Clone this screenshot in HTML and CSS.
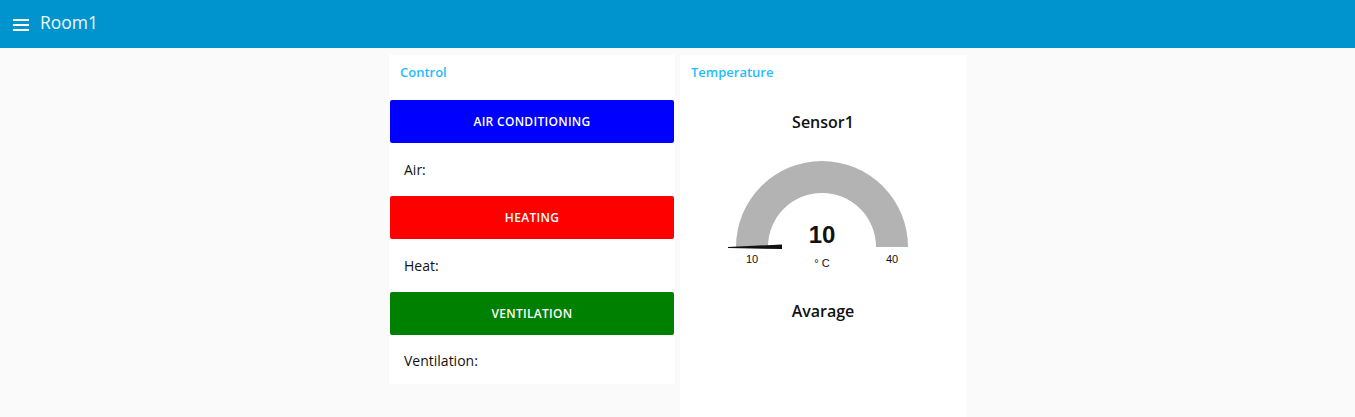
FILE: index.html
```html
<!DOCTYPE html>
<html>
<head>
<meta charset="utf-8">
<link rel="stylesheet" href="styles.css">
</head>
<body>
<header class="toolbar">
  <svg class="menu-icon" width="16" height="14" viewBox="0 0 16 14">
    <rect x="0" y="1" width="16" height="2" fill="#fff"/>
    <rect x="0" y="6" width="16" height="2" fill="#fff"/>
    <rect x="0" y="11" width="16" height="2" fill="#fff"/>
  </svg>
  <span class="title">Room1</span>
</header>
<main class="content">
  <section class="card control">
    <div class="card-title">Control</div>
    <button class="btn btn-blue">AIR CONDITIONING</button>
    <div class="label-row">Air:</div>
    <button class="btn btn-red">HEATING</button>
    <div class="label-row">Heat:</div>
    <button class="btn btn-green">VENTILATION</button>
    <div class="label-row last">Ventilation:</div>
  </section>
  <section class="card temp">
    <div class="card-title">Temperature</div>
    <div class="gauge-title">Sensor1</div>
    <svg class="gauge" width="286" height="145" viewBox="0 0 286 145">
      <path d="M 56 103 A 86 86 0 0 1 228 103 L 196 103 A 54 54 0 0 0 88 103 Z" fill="#b3b3b3"/>
      <polygon points="48,103 102,100.5 102,105 48,104" fill="#111"/>
      <text x="142" y="99" class="g-value" text-anchor="middle">10</text>
      <text x="142" y="123" class="g-unit" text-anchor="middle">° C</text>
      <text x="72" y="119" class="g-minmax" text-anchor="middle">10</text>
      <text x="212" y="119" class="g-minmax" text-anchor="middle">40</text>
    </svg>
    <div class="gauge-title">Avarage</div>
  </section>
</main>
</body>
</html>
```

FILE: styles.css
```css
html, body {
  margin: 0;
  padding: 0;
  background: #fafafa;
  font-family: "Open Sans", "Noto Sans", sans-serif;
  overflow: hidden;
}

.toolbar {
  height: 48px;
  background: #0094ce;
  display: flex;
  align-items: center;
  padding-left: 13px;
  gap: 11px;
  box-sizing: border-box;
}

.menu-icon {
  display: block;
  margin-top: 1px;
}

.title {
  color: #f0f6fa;
  font-size: 17.5px;
  line-height: 20px;
  margin-top: -4px;
}

.content {
  display: flex;
  justify-content: center;
  align-items: flex-start;
  gap: 5px;
  padding-top: 7px;
}

.card {
  width: 286px;
  background: #fff;
  display: flex;
  flex-direction: column;
}

.card-title {
  height: 45px;
  box-sizing: border-box;
  padding: 7px 0 0 11px;
  line-height: 20px;
  font-size: 13px;
  font-weight: 600;
  color: #1fbcff;
}

.btn {
  height: 43px;
  margin: 0 1px;
  border: none;
  border-radius: 2px;
  color: #fff;
  font-family: "Open Sans", "Noto Sans", sans-serif;
  font-size: 12px;
  font-weight: 600;
  letter-spacing: 0.3px;
  padding: 0;
}

.btn-blue { background: #0000ff; }
.btn-red { background: #ff0000; }
.btn-green { background: #008000; }

.label-row {
  height: 53px;
  display: flex;
  align-items: center;
  padding-left: 15px;
  font-size: 14px;
  color: #111;
}

.label-row.last {
  height: 49px;
  padding-top: 2px;
  box-sizing: border-box;
}

.temp {
  height: 362px;
}

.gauge-title {
  height: 44px;
  display: flex;
  align-items: center;
  justify-content: center;
  font-size: 16px;
  font-weight: 600;
  color: #111;
}

.gauge {
  display: block;
}

.g-value {
  font-family: "Liberation Sans", Arial, sans-serif;
  font-size: 24px;
  font-weight: bold;
  fill: #111;
}

.g-unit {
  font-family: "Liberation Sans", Arial, sans-serif;
  font-size: 11px;
  fill: #111;
}

.g-minmax {
  font-family: "Liberation Sans", Arial, sans-serif;
  font-size: 11px;
  fill: #111;
}
```
